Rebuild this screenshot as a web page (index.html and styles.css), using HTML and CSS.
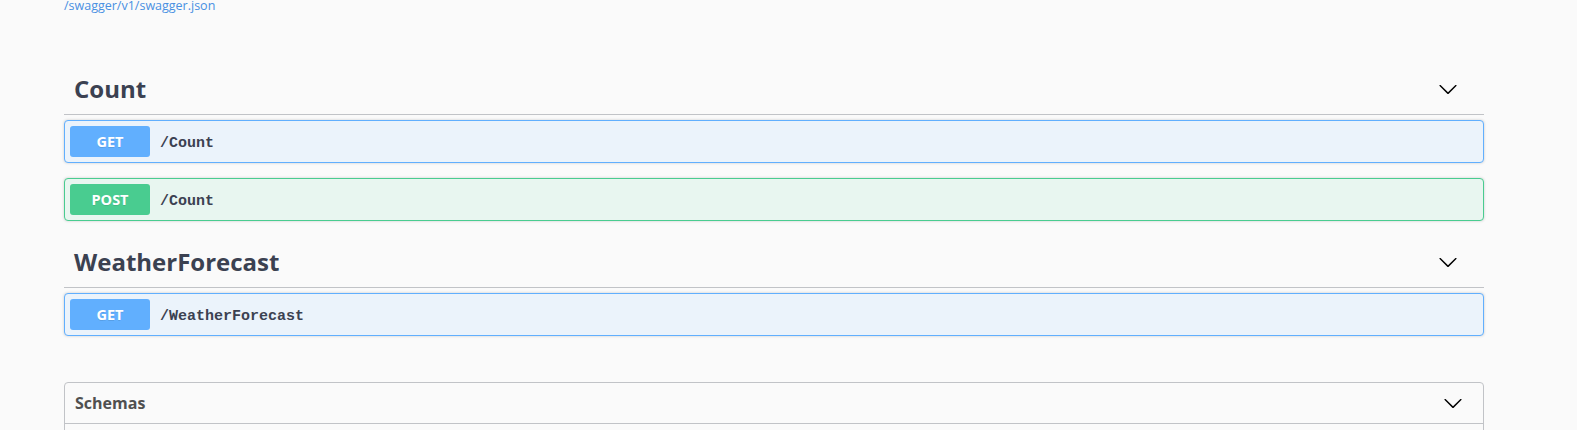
FILE: index.html
```html
<!DOCTYPE html>
<html>
<head>
<meta charset="utf-8">
<title>Swagger UI</title>
<link rel="stylesheet" href="styles.css">
</head>
<body>
<div class="wrapper">
  <div class="info-link"><a href="#">/swagger/v1/swagger.json</a></div>

  <section class="tag-section">
    <h3 class="tag-heading">
      <span class="tag-name">Count</span>
      <span class="expand-btn">
        <svg width="20" height="20" viewBox="0 0 20 20"><path d="M17.418 6.109c.272-.268.709-.268.979 0s.271.701 0 .969l-7.908 7.83c-.27.268-.707.268-.979 0l-7.908-7.83c-.27-.268-.27-.701 0-.969.271-.268.709-.268.979 0L10 13.25l7.418-7.141z"/></svg>
      </span>
    </h3>
    <div class="opblock opblock-get">
      <span class="method method-get">GET</span>
      <span class="path">/Count</span>
    </div>
    <div class="opblock opblock-post">
      <span class="method method-post">POST</span>
      <span class="path">/Count</span>
    </div>
  </section>

  <section class="tag-section">
    <h3 class="tag-heading">
      <span class="tag-name">WeatherForecast</span>
      <span class="expand-btn">
        <svg width="20" height="20" viewBox="0 0 20 20"><path d="M17.418 6.109c.272-.268.709-.268.979 0s.271.701 0 .969l-7.908 7.83c-.27.268-.707.268-.979 0l-7.908-7.83c-.27-.268-.27-.701 0-.969.271-.268.709-.268.979 0L10 13.25l7.418-7.141z"/></svg>
      </span>
    </h3>
    <div class="opblock opblock-get">
      <span class="method method-get">GET</span>
      <span class="path">/WeatherForecast</span>
    </div>
  </section>

  <section class="models">
    <h4 class="models-heading">
      <span>Schemas</span>
      <svg width="20" height="20" viewBox="0 0 20 20"><path d="M17.418 6.109c.272-.268.709-.268.979 0s.271.701 0 .969l-7.908 7.83c-.27.268-.707.268-.979 0l-7.908-7.83c-.27-.268-.27-.701 0-.969.271-.268.709-.268.979 0L10 13.25l7.418-7.141z"/></svg>
    </h4>
    <div class="models-body"></div>
  </section>
</div>
</body>
</html>
```

FILE: styles.css
```css
html, body {
  margin: 0;
  padding: 0;
  background: #fafafa;
  font-family: "Open Sans", "Noto Sans", sans-serif;
  color: #3b4151;
  overflow: hidden;
}

.wrapper {
  width: 1420px;
  margin-left: 64px;
}

.info-link {
  margin-top: -2px;
  font-size: 12.5px;
  line-height: 16px;
}

.info-link a {
  color: #4990e2;
  text-decoration: none;
}

.tag-section:first-of-type {
  margin-top: 49px;
}

.tag-heading {
  display: flex;
  align-items: center;
  margin: 0 0 5px;
  padding: 10px 20px 10px 10px;
  border-bottom: 1px solid #c1c3c7;
  font-size: 24px;
  font-weight: 700;
  line-height: 31px;
  color: #3b4151;
}

.tag-name {
  flex: 1;
}

.expand-btn {
  display: flex;
  padding: 0 6px 0 10px;
}

.expand-btn svg,
.models-heading svg {
  display: block;
  fill: #000;
}

.opblock {
  display: flex;
  align-items: center;
  margin: 0 0 15px;
  padding: 5px;
  border: 1px solid;
  border-radius: 4px;
  box-shadow: 0 0 3px rgba(0, 0, 0, 0.19);
}

.opblock-get {
  background: #ebf3fb;
  border-color: #61affe;
}

.opblock-post {
  background: #e8f6f0;
  border-color: #49cc90;
}

.method {
  min-width: 80px;
  padding: 6px 0;
  border-radius: 3px;
  font-size: 14.5px;
  font-weight: 700;
  line-height: 19px;
  text-align: center;
  color: #fff;
  text-shadow: 0 1px 0 rgba(0, 0, 0, 0.1);
}

.method-get {
  background: #61affe;
}

.method-post {
  background: #49cc90;
}

.path {
  padding: 3px 10px 0;
  font-family: "Liberation Mono", monospace;
  font-size: 15px;
  font-weight: 600;
  color: #3b4151;
}

.models {
  margin-top: 46px;
  border: 1px solid #c1c3c7;
  border-radius: 4px;
}

.models-heading {
  display: flex;
  align-items: center;
  justify-content: space-between;
  margin: 0;
  padding: 10px 20px 10px 10px;
  border-bottom: 1px solid #c1c3c7;
  font-size: 16px;
  font-weight: 700;
  line-height: 20px;
  color: #505050;
}

.models-body {
  height: 120px;
}
```
